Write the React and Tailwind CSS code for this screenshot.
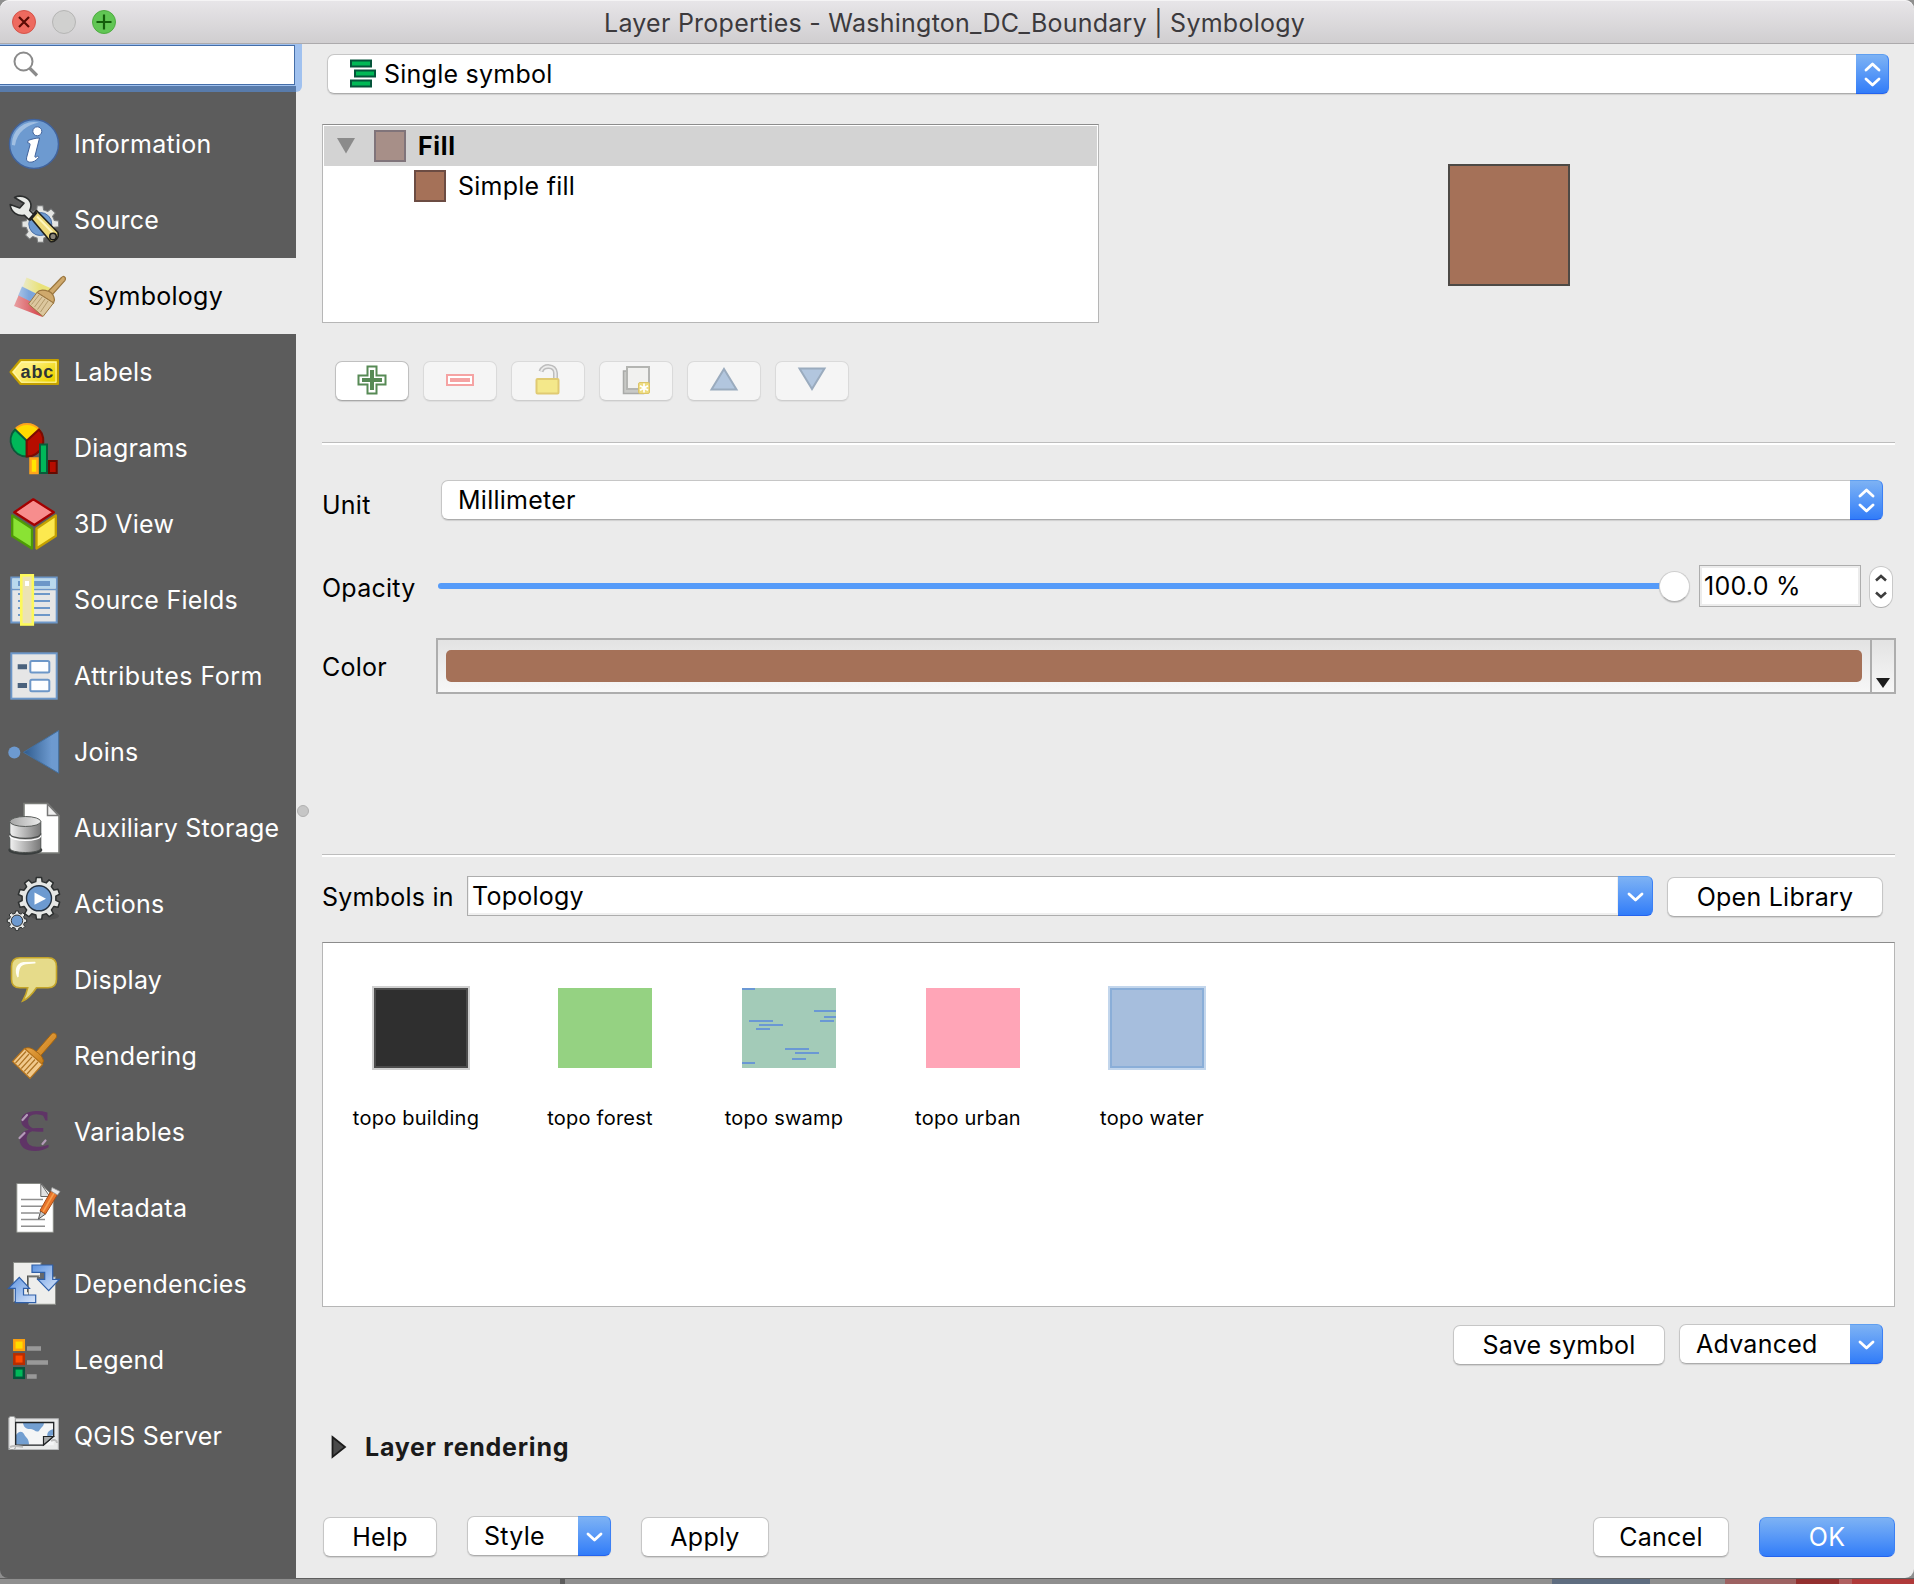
import React from "react";

function gearPath(cx, cy, ro, ri, n, phase = 0) {
  const pts = [];
  const step = (Math.PI * 2) / n;
  for (let i = 0; i < n; i++) {
    const a = phase + i * step;
    [[-0.3, ri], [-0.2, ro], [0.2, ro], [0.3, ri]].forEach(([f, r]) => {
      pts.push(`${(cx + Math.cos(a + f * step) * r).toFixed(2)},${(cy + Math.sin(a + f * step) * r).toFixed(2)}`);
    });
  }
  return `M${pts.join("L")}Z`;
}

const icons = {
  Information: (
    <>
      <defs>
        <clipPath id="infoClip"><circle cx="34" cy="38" r="23.5" /></clipPath>
      </defs>
      <circle cx="34" cy="38" r="24.5" fill="#6d9ad0" stroke="#41639c" strokeWidth="1.5" />
      <path d="M12 39a22 22 0 0 1 27-22.500c-11 2-22 9-24 23z" fill="#c5d8ee" opacity=".6" clipPath="url(#infoClip)" />
      <circle cx="37.300" cy="25.300" r="4.500" fill="#fff" stroke="#41639c" strokeWidth="1" />
      <path d="M28 34.500c4-1.500 8-2.500 11.500-2.500l-4.500 18c-.4 1.600.8 1.800 2.500 0l1.200 1.400c-2.500 3.500-6 5.100-9 4.800-2.800-.3-3.700-2.200-3-5l3.300-12.200c.3-1.200-.3-2-2.300-2.100z" fill="#fff" stroke="#41639c" strokeWidth="1" />
    </>
  ),
  Source: (
    <>
      <path d={gearPath(40.3, 42, 18.5, 14.5, 8, 0.39)} transform="rotate(22 40.300 42)" fill="#e4e5e3" stroke="#77797a" strokeWidth="1" />
      <circle cx="40.300" cy="42" r="11.500" fill="#6d9ad0" stroke="#4b6fa5" strokeWidth="1" />
      <path d="M30 35l6.500-6.500L58 50.500c1.500 5-3 10-7.500 9z" fill="#edd97a" stroke="#20201c" strokeWidth="1.600" strokeLinejoin="round" />
      <path d="M37 34.500l15.500 16" stroke="#fff6bd" strokeWidth="2" />
      <path d="M14.500 15.500c5-2.500 12.500-1.500 15.500 4 1.500 3 1.200 6-.3 9l4.500 4.500-5 5-5-4.800c-6 1.300-13.500-2.700-14-10.700l9.500 3.500 4.300-4.800z" fill="#e9ebe8" stroke="#2c2e2e" strokeWidth="1.600" strokeLinejoin="round" />
      <path d="M29.500 38l7-8" stroke="#222" strokeWidth="3" />
      <circle cx="53" cy="54.500" r="3.300" fill="#8a857a" stroke="#161616" strokeWidth="1.500" />
    </>
  ),
  Symbology: (
    <>
      <defs>
        <linearGradient id="symA" x1="0" x2="1"><stop offset="0" stopColor="#ece77a" stopOpacity=".3" /><stop offset=".6" stopColor="#e9e27a" /></linearGradient>
        <linearGradient id="symB" x1="0" x2="1"><stop offset="0" stopColor="#e8a0a2" /><stop offset=".8" stopColor="#d85258" /></linearGradient>
        <linearGradient id="symC" x1="0" x2="1"><stop offset="0" stopColor="#a9c4e6" /><stop offset=".5" stopColor="#7ba5dc" /></linearGradient>
      </defs>
      <path d="M26.500 19.500l25 11-5 10-24-11z" fill="url(#symA)" />
      <path d="M22 28.500l18 9-3 10-19-9.500z" fill="url(#symC)" />
      <path d="M18.500 37.500l22 11 2 10.500-28.500-11z" fill="url(#symB)" />
      <path d="M61.500 19.500c2-2.500 5 0 3.500 2.800L52.500 36.500l-4-3.500z" fill="#cfa96c" stroke="#9b7740" strokeWidth="1.200" />
      <path d="M37 34.500c3-4 9-2 12-1 2.500 1 5 4 5.500 8.500l-1 3z" fill="#cfa96c" stroke="#9b7740" strokeWidth="1.200" />
      <path d="M37 34.500L53.500 45 43 58.500 28.500 46z" fill="#dcc79e" stroke="#9b7740" strokeWidth="1" />
      <path d="M39 37L31.500 46.500M42 39L34.500 49M45 41L37.500 51.500M48 43L40.500 54" stroke="#b39a6c" strokeWidth="1" />
    </>
  ),
  Labels: (
    <>
      <defs><linearGradient id="lab" x1="0" y1="0" x2="1" y2=".6"><stop offset=".4" stopColor="#fff07e" /><stop offset="1" stopColor="#edd400" /></linearGradient></defs>
      <path d="M10.500 38L20.500 26H58v24H20.500z" fill="url(#lab)" stroke="#c4a000" strokeWidth="2" strokeLinejoin="round" />
      <path d="M13.500 38L21.500 28.200H56v20H21.500z" fill="none" stroke="#fff7b0" strokeWidth="1" />
      <text x="20.500" y="43.700" fontSize="18" fontWeight="700" fontFamily="Liberation Sans, sans-serif" textLength="33" fill="#2e3436">abc</text>
    </>
  ),
  Diagrams: (
    <>
      <path d="M26.700 30.700L15 19.500a16 16 0 0 1 24 0z" fill="#ffda00" stroke="#ffa41c" strokeWidth="2" />
      <path d="M26.700 30.700L15 19.500a16 16 0 0 0 11.700 27z" fill="#00b859" stroke="#0a5a3a" strokeWidth="2" />
      <path d="M26.700 30.700L39 19.500a16 16 0 0 1-12.300 27z" fill="#b60d00" stroke="#7a0c02" strokeWidth="2" />
      <rect x="30.500" y="48.500" width="7" height="14.500" fill="#ffe600" stroke="#ffa41c" strokeWidth="2.500" />
      <rect x="40" y="34.500" width="7" height="28.500" fill="#00b859" stroke="#0a5a3a" strokeWidth="2" />
      <rect x="49" y="51" width="7.700" height="12" fill="#b60d00" stroke="#640a02" strokeWidth="2" />
    </>
  ),
  "3D View": (
    <g strokeWidth="2.300" strokeLinejoin="round">
      <path d="M12.200 29.500l19.800 13v20l-19.800-12.500z" fill="#8ae234" stroke="#4e9a06" />
      <path d="M55.800 29.500L36.500 42.500v20l19.300-12.500z" fill="#fce94f" stroke="#c4a000" />
      <path d="M33.300 13.300l20.500 13-19.500 12.700-20-12.700z" fill="#f78d8d" stroke="#a40000" />
    </g>
  ),
  "Source Fields": (
    <>
      <rect x="11.300" y="15.500" width="45.400" height="45" fill="#e6e6e6" stroke="#6d97c8" strokeWidth="2" />
      <rect x="12.300" y="16.500" width="43.400" height="10" fill="#b9d9ee" />
      <path d="M12 27.500h45" stroke="#6d97c8" strokeWidth="1.600" />
      <rect x="18" y="19" width="32" height="5" fill="#6d97c8" />
      <path d="M18 32h32M18 39h32M18 46h32M18 53h32" stroke="#6d97c8" strokeWidth="2" />
      <rect x="21.300" y="13.300" width="11.500" height="49.200" fill="#ece3b4" stroke="#fdf95a" strokeWidth="2.600" />
      <rect x="25" y="19" width="4" height="5" fill="#fff" />
    </>
  ),
  "Attributes Form": (
    <>
      <rect x="11.300" y="15.300" width="45.400" height="45.400" fill="#e6e6e6" stroke="#6d97c8" strokeWidth="2" />
      <path d="M17.700 28.800H27M17.700 47.500H27" stroke="#4a617c" strokeWidth="5" />
      <rect x="30.300" y="23" width="19" height="11.500" rx="1.500" fill="#fdfeff" stroke="#6d97c8" strokeWidth="2" />
      <rect x="30.300" y="41.700" width="19" height="11.500" rx="1.500" fill="#fdfeff" stroke="#6d97c8" strokeWidth="2" />
    </>
  ),
  Joins: (
    <>
      <defs><linearGradient id="join"><stop offset="0" stopColor="#2f5b8d" /><stop offset=".8" stopColor="#6d9ad0" /></linearGradient></defs>
      <circle cx="14.300" cy="38.500" r="6" fill="#6d9ad0" />
      <path d="M23.500 38.300L58.700 16.500v42.700z" fill="url(#join)" stroke="#44709f" strokeWidth="1" />
    </>
  ),
  "Auxiliary Storage": (
    <>
      <defs>
        <linearGradient id="cyl"><stop offset="0" stopColor="#f2f2f2" /><stop offset=".5" stopColor="#b4b4b4" /><stop offset="1" stopColor="#777" /></linearGradient>
        <linearGradient id="cylTop" x1="0" x2="1"><stop offset="0" stopColor="#a5a5a5" /><stop offset="1" stopColor="#ececec" /></linearGradient>
      </defs>
      <path d="M24 13.500h23.500L59 25.500V63H24z" fill="#fff" stroke="#7b7d79" strokeWidth="1.600" />
      <path d="M47.500 14v11.500H58.500z" fill="#eee" stroke="#777" strokeWidth="1.500" />
      <ellipse cx="25.300" cy="60" rx="17" ry="5" fill="#3a3e3e" />
      <path d="M9.800 31.500v26.500c0 6 31 6 31 0V31.500z" fill="url(#cyl)" stroke="#4e5250" strokeWidth="1" />
      <ellipse cx="25.300" cy="31.500" rx="15.500" ry="5" fill="url(#cylTop)" stroke="#5a5d5b" strokeWidth="1" />
      <path d="M9.800 43.500c0 6.500 31 6.500 31 0" fill="none" stroke="#4a4c4b" strokeWidth="1.300" />
      <path d="M9.800 45.500c0 6.500 31 6.500 31 0" fill="none" stroke="#fff" strokeWidth="1.200" />
    </>
  ),
  Actions: (
    <>
      <ellipse cx="45" cy="50" rx="14" ry="4" fill="#444" opacity=".5" />
      <path d={gearPath(39, 32.3, 21, 17, 10, 0.31)} fill="#e6e7e5" stroke="#2d3030" strokeWidth="1.500" strokeLinejoin="round" />
      <circle cx="39" cy="32.300" r="12.500" fill="#6d9ad0" stroke="#23303f" strokeWidth="1.400" />
      <path d="M34.500 26.500L46 32.700 34.500 38.700z" fill="#fff" />
      <path d={gearPath(17, 54.7, 9.8, 7.7, 8)} fill="#e6e7e5" stroke="#2d3030" strokeWidth="1" strokeLinejoin="round" />
      <circle cx="17" cy="54.700" r="5.700" fill="#6d9ad0" stroke="#333" strokeWidth="1" />
    </>
  ),
  Display: (
    <>
      <path d="M20 15.800h28q8.500 0 8.500 8.500v13q0 8.500-8.500 8.500H36.500C33 51 29 56.500 22.700 59c2.500-4.500 4-8.500 5-13.200H20q-8.500 0-8.500-8.500v-13q0-8.500 8.500-8.500z" fill="#e6db8a" stroke="#c4a52a" strokeWidth="1.600" />
      <path d="M17.500 35.500c-3-6-2.500-14 6-15.500l11.500-.3c1 .8.500 1.800-.3 1.900L26 22.300c-6 .7-7 5-7.300 12.500z" fill="#fffef4" />
    </>
  ),
  Rendering: (
    <>
      <defs><linearGradient id="brush" x1="0" y1="0" x2="1" y2="1"><stop offset="0" stopColor="#e9a64b" /><stop offset="1" stopColor="#c77c14" /></linearGradient></defs>
      <path d="M51.500 16c2.500-2.500 6.500.5 4.500 4L39.500 39l-4.500-4z" fill="url(#brush)" stroke="#a6650e" strokeWidth="1" />
      <path d="M24.500 30.500c4.500-2 8.500.5 11 2.500s6.500 4 8 10l-1.500 3.500z" fill="url(#brush)" stroke="#a6650e" strokeWidth="1" />
      <path d="M24.500 30.500L42.500 46.500 30 60.500 12.500 43.500z" fill="#f1c98c" stroke="#b5731b" strokeWidth="1.200" />
      <path d="M26 33.500L15.500 45M29 36L18.500 47.800M32 38.800L21.300 50.500M35 41.500L24.200 53.300M38 44L27 56" stroke="#ad7324" strokeWidth="1.200" />
    </>
  ),
  Variables: (
    <>
      <text x="16.500" y="56" fontSize="82" fontFamily="Liberation Serif, serif" fill="#5f3466">ε</text>
      <path d="M22.500 26l4.500-5M19.500 44l5-5M42.500 50l3-3.500" stroke="#b39bb8" strokeWidth="2.200" strokeLinecap="round" />
    </>
  ),
  Metadata: (
    <>
      <path d="M16.800 13.500h24L53.300 26.500V62.300H16.800z" fill="#fff" stroke="#888a85" strokeWidth="1" />
      <path d="M40.800 13.500V26.500h9z" fill="#e2e2e2" stroke="#666" strokeWidth="1" />
      <path d="M21 29.500h22M21 36.300h22M21 43h18M21 49.500h24M21 56.300h24" stroke="#8f8f8f" strokeWidth="1.500" />
      <path d="M38.500 49l2-8 5 3z" fill="#c9c9c9" stroke="#555" strokeWidth="1" />
      <path d="M40 40.500L51 21l6.500 3.500L45.500 44z" fill="#e8732a" stroke="#a84e14" strokeWidth="1" />
      <path d="M43 42L54 23" stroke="#f7a04c" strokeWidth="1.500" />
      <path d="M51 21l1-3.500 8 4-2.500 3.500z" fill="#e8e8e8" stroke="#999" strokeWidth=".8" />
    </>
  ),
  Dependencies: (
    <>
      <defs><linearGradient id="dep" x1="0" y1="0" x2="1" y2="1"><stop offset="0" stopColor="#5c93e0" /><stop offset="1" stopColor="#dbe7fb" /></linearGradient></defs>
      <rect x="13.500" y="16.500" width="27.500" height="39" fill="#eeeeec" stroke="#8a8c88" strokeWidth="1" />
      <path d="M27 29.500h13l-3 3v9l-10 5z" fill="#555753" />
      <rect x="28.500" y="31" width="27" height="27.300" fill="#eeeeec" stroke="#8a8c88" strokeWidth="1" />
      <path d="M40 26h6v8h-9v-3h3z" fill="#66686a" />
      <path d="M32 19H52.700V33.300H59.300L48.700 44.700L37.700 33.300H44.700V26.300H32z" fill="url(#dep)" stroke="#2f5fa8" strokeWidth="1.200" />
      <path d="M19.300 31.300L29.500 42.300H23.500V49H35.700V56.700H15.300V42.300H8.500z" fill="url(#dep)" stroke="#2f5fa8" strokeWidth="1.200" />
    </>
  ),
  Legend: (
    <g strokeWidth="2.500">
      <rect x="14.300" y="18.300" width="9.500" height="9.500" fill="#ffdc00" stroke="#ffa30e" />
      <rect x="14.300" y="32.300" width="9.500" height="9.500" fill="#ff4a00" stroke="#b92d00" />
      <rect x="14.300" y="46.300" width="9.500" height="9.500" fill="#00b859" stroke="#05533a" />
      <path d="M27 26.500h14M27 40.500h21M27 54.500h9.700" stroke="#999" strokeWidth="4.700" />
    </g>
  ),
  "QGIS Server": (
    <>
      <rect x="9" y="20.800" width="49.300" height="30.700" fill="#e9eaea" stroke="#b8babb" strokeWidth="1" />
      <rect x="8.800" y="18.500" width="6.500" height="33" rx="2" fill="#f1f1f1" stroke="#9a9c9c" strokeWidth="1" />
      <rect x="15.700" y="24.500" width="38" height="22.700" fill="#f4f5f6" />
      <path d="M23 25h21c-.5 4-3 4-5 8-3 2-5-2-8-2s-7 0-8-6zM16 37c3-4 6-4 8-1 1 3 5 4 5 10.500H16zM53.500 31c-4 1-7 3-6 8l6-2z" fill="#739fd1" />
      <path d="M15.700 24.500h38V38L43.500 47.200H15.700z" fill="none" stroke="#1f2224" strokeWidth="1.300" />
      <path d="M43.500 47V38.500H53.500z" fill="#a9abac" stroke="#1f2224" strokeWidth="1.200" />
      <path d="M10 49c4-2 8-1 13 0M51 43c3-2 6-1 6 2" stroke="#bbb" strokeWidth="2" fill="none" />
    </>
  ),
};

const navItems = Object.keys(icons);

function NavItem({ name }) {
  const active = name === "Symbology";
  return (
    <div className={active ? "flex h-[76px] items-center bg-[#ebebeb] text-black" : "flex h-[76px] items-center text-white"}>
      <svg width="72" height="76" viewBox="0 0 72 76" className="shrink-0 overflow-visible">{icons[name]}</svg>
      <span className={active ? "ml-4 whitespace-nowrap" : name === "Attributes Form" ? "ml-0.5 tracking-[0.48px] whitespace-nowrap" : "ml-0.5 whitespace-nowrap"}>{name}</span>
    </div>
  );
}

function Chevrons({ double, className = "w-[33px]" }) {
  return (
    <div className={`flex shrink-0 items-center justify-center self-stretch rounded-r-[6px] border border-l-0 border-t-[#5f9ff0] border-r-[#3c80f4] border-b-[#2463ee] bg-linear-to-b from-[#7db2f4] to-[#317cf8] ${className}`}>
      <svg width="18" height="28" viewBox="0 0 18 28" fill="none" stroke="#fff" strokeWidth="2.800" strokeLinecap="round" strokeLinejoin="round">
        {double ? <path d="M3 10L9.500 4L16 10M3 19L9.500 25L16 19" /> : <path d="M3 12L9.500 18L16 12" />}
      </svg>
    </div>
  );
}

function Button({ className, children }) {
  return (
    <div className={`flex h-10 items-center justify-center rounded-[7px] border border-[#c6c6c6] border-b-[#acacac] bg-white shadow-[0_1px_1px_rgba(0,0,0,0.12)] ${className}`}>
      {children}
    </div>
  );
}

function Combo({ className, double, children }) {
  return (
    <div className={`flex h-10 items-center rounded-[7px] shadow-[0_1px_1px_rgba(0,0,0,0.12)] ${className}`}>
      <div className="flex min-w-0 flex-1 items-center self-stretch rounded-l-[7px] border border-r-0 border-[#c6c6c6] border-b-[#acacac] bg-white">{children}</div>
      <Chevrons double={double} />
    </div>
  );
}

function ToolButton({ enabled, children }) {
  return (
    <div className={enabled
      ? "flex h-10 w-[74px] items-center justify-center rounded-[7px] border border-[#c0c0c0] border-b-[#a8a8a8] bg-white pb-0.5 shadow-[0_1px_1px_rgba(0,0,0,0.12)]"
      : "flex h-10 w-[74px] items-center justify-center rounded-[7px] border border-[#dadada] border-b-[#cdcdcd] bg-[#f5f5f5] pb-0.5 shadow-[0_1px_1px_rgba(0,0,0,0.06)]"}>
      <svg width="36" height="36" viewBox="0 0 36 36">{children}</svg>
    </div>
  );
}

function Divider({ className }) {
  return <div className={`h-[3px] shrink-0 border-t border-[#bdbdbd] bg-white ${className}`} />;
}

const symbols = [
  { name: "topo building", fill: "bg-[#2f2f2f] outline-2 outline-[#d0d0d0] border-2 border-[#4c4c4c]" },
  { name: "topo forest", fill: "bg-[#95d282]" },
  { name: "topo swamp", fill: "bg-[#a3cbb8]" },
  { name: "topo urban", fill: "bg-[#ffa5b7]" },
  { name: "topo water", fill: "bg-[#a6bedd] outline-2 outline-[#c3d6ec] border-2 border-[#8aaed8]" },
];

export default function App() {
  return (
    <div className="flex h-[1584px] w-[1914px] flex-col overflow-hidden bg-[#8f8f8f] font-['Inter',sans-serif] text-[25px] leading-[30px] tracking-[0.25px] text-black">
      <header className="flex h-11 shrink-0 items-center rounded-t-[9px] border-b border-[#acaaac] bg-linear-to-b from-[#e8e6e9] to-[#d0ced0] shadow-[inset_0_1px_0_#f5f4f5]">
        <div className="flex w-[604px] gap-4 pl-3">
          <svg width="24" height="24" viewBox="0 0 24 24"><circle cx="12" cy="12" r="11.500" fill="#ee6a5f" stroke="#d5544a" /><path d="M7 7l10 10M17 7L7 17" stroke="#5b0c05" strokeWidth="2.200" /></svg>
          <svg width="24" height="24" viewBox="0 0 24 24"><circle cx="12" cy="12" r="11.500" fill="#d0d0cf" stroke="#b5b5b4" /></svg>
          <svg width="24" height="24" viewBox="0 0 24 24"><circle cx="12" cy="12" r="11.500" fill="#61c654" stroke="#4fab42" /><path d="M12 4.500v15M4.500 12h15" stroke="#135e0b" strokeWidth="2.200" /></svg>
        </div>
        <span className="pt-0.5 whitespace-nowrap text-[#3c3a3d]">Layer Properties - Washington_DC_Boundary | Symbology</span>
      </header>

      <div className="flex h-[1534px] shrink-0">
        <aside className="relative flex w-[296px] shrink-0 flex-col rounded-bl-[8px] bg-[#5c5c5c]">
          <div className="flex h-12 shrink-0 items-start border-b-[6px] border-[#587bab] bg-[#a0c1ef]">
            <div className="mt-px flex h-10 w-[295px] items-center border border-l-0 border-[#456ea8] bg-white pl-3">
              <svg width="28" height="28" viewBox="0 0 28 28" fill="none" stroke="#8b8b8b"><circle cx="11.500" cy="10.500" r="9" strokeWidth="2" /><path d="M17.500 17L25 24.500" strokeWidth="3.200" /></svg>
            </div>
          </div>
          <div className="absolute top-0 left-[296px] h-12 w-1.5 rounded-br-[6px] bg-[#a0c1ef]" />
          <nav className="mt-[14px] flex flex-col">
            {navItems.map((n) => <NavItem key={n} name={n} />)}
          </nav>
          <div className="absolute top-[761px] left-[297px] size-3 rounded-full border border-[#b0b0b0] bg-[#c6c6c6]" />
        </aside>

        <main className="flex min-w-0 flex-1 flex-col rounded-br-[9px] bg-[#ebebeb] pr-[19px] pl-[26px]">
          <Combo double className="mt-2.5 mr-1.5 ml-[5px] shrink-0">
            <svg width="28" height="30" viewBox="0 0 28 30" fill="#00b956" stroke="#04553a" strokeWidth="2" className="ml-[22px]">
              <rect x="1" y="1.500" width="20" height="6" /><rect x="5" y="11.500" width="20" height="6" /><rect x="1" y="21.500" width="20" height="6" />
            </svg>
            <span className="ml-1.5 whitespace-nowrap">Single symbol</span>
          </Combo>

          <div className="mt-[30px] flex h-[199px] shrink-0">
            <div className="w-[777px] border border-[#b6b6b6] border-t-[#8c8c8c] bg-white px-px pt-px">
              <div className="flex h-10 items-center bg-[#d3d3d3] pl-[13px]">
                <svg width="18" height="16" viewBox="0 0 18 16"><path d="M0 0h18L9 15.500z" fill="#8b8b8b" /></svg>
                <div className="ml-[19px] size-8 border-2 border-[#80747a] bg-[#a78f88]" />
                <span className="ml-3 font-bold tracking-[0.7px]">Fill</span>
              </div>
              <div className="flex h-10 items-center pl-[90px]">
                <div className="size-8 border-2 border-[#6c4c43] bg-[#a57158]" />
                <span className="ml-3">Simple fill</span>
              </div>
            </div>
            <div className="mt-10 ml-[349px] size-[122px] border-2 border-[#4d4945] bg-[#a57158]" />
          </div>

          <div className="mt-[38px] ml-[13px] flex shrink-0 gap-[14px]">
            <ToolButton enabled>
              <path d="M13.500 4.500h9v9h9v9h-9v9h-9v-9h-9v-9h9z" fill="#fff" stroke="#578a55" strokeWidth="2" />
              <path d="M18 8v20M8 18h20" stroke="#578a55" strokeWidth="4" />
            </ToolButton>
            <ToolButton>
              <rect x="5" y="13" width="26" height="10" fill="#fff" stroke="#f5a3a3" strokeWidth="2" />
              <rect x="8" y="16" width="20" height="4" fill="#f5a3a3" />
            </ToolButton>
            <ToolButton>
              <path d="M11 9.500C13 2.500 25.500 3 25.500 11v6" fill="none" stroke="#bdbdbd" strokeWidth="5" />
              <path d="M11 9.500C13 2.500 25.500 3 25.500 11v6" fill="none" stroke="#ececec" strokeWidth="2" />
              <rect x="6.500" y="17" width="22" height="14.500" rx="1" fill="#f4e88a" stroke="#e0ca72" strokeWidth="2" />
            </ToolButton>
            <ToolButton>
              <rect x="5.500" y="9" width="20" height="22.500" fill="#c8c9c6" stroke="#a9aaa8" strokeWidth="1.500" />
              <rect x="9" y="5" width="22" height="22" fill="#f1f1ef" stroke="#b4b5b2" strokeWidth="2" />
              <rect x="20.500" y="20.500" width="11" height="11" rx="1.500" fill="#eedc80" stroke="#dcc468" />
              <path d="M26 21.500v9M22 23.700l8 4.600M30 23.700l-8 4.600" stroke="#fff" strokeWidth="1.700" />
            </ToolButton>
            <ToolButton>
              <path d="M18 7L30.500 27.500H5.500z" fill="#b2c6de" stroke="#9aabbe" strokeWidth="2" />
            </ToolButton>
            <ToolButton>
              <path d="M18 27L5.500 6.500H30.500z" fill="#b2c6de" stroke="#9aabbe" strokeWidth="2" />
            </ToolButton>
          </div>

          <Divider className="mt-[41px]" />

          <div className="mt-[35px] flex h-10 shrink-0 items-center">
            <span className="mt-[9px]">Unit</span>
            <Combo double className="mr-3 ml-auto w-[1442px]"><span className="ml-4">Millimeter</span></Combo>
          </div>

          <div className="mt-[45px] flex h-[43px] shrink-0 items-center">
            <span className="mt-[3px] w-[116px]">Opacity</span>
            <div className="mb-px h-1.5 flex-1 rounded-l-full bg-[#559bf9]" />
            <div className="mb-px -ml-1 size-[31px] rounded-full border border-[#cfcfcf] border-b-[#b0b0b0] bg-white shadow-[0_1px_1px_rgba(0,0,0,0.15)]" />
            <div className="mb-px ml-[9px] flex h-[42px] w-[162px] items-center border border-[#adadad] bg-white pl-1 shadow-[inset_0_0_0_2px_#ececec]"><span>100.0 %</span></div>
            <div className="mr-0.5 ml-2 flex h-[42px] w-6 items-center justify-center rounded-full border border-[#c8c8c8] border-b-[#adadad] bg-white">
              <svg width="16" height="30" viewBox="0 0 16 30" fill="none" stroke="#3d3d3d" strokeWidth="2.600"><path d="M3 8.500L8 4L13 8.500M3 20.500L8 25L13 20.500" /></svg>
            </div>
          </div>

          <div className="mt-[30px] flex h-14 shrink-0 items-center">
            <span className="mt-0.5">Color</span>
            <div className="-mr-px ml-auto flex h-14 w-[1460px] border-2 border-[#adadad] bg-linear-to-b from-[#e3e3e3] to-[#f7f7f7]">
              <div className="mt-2.5 ml-2 h-8 w-[1416px] rounded-[5px] bg-[#a57158]" />
              <div className="ml-2 flex flex-1 items-end justify-center border-l-2 border-[#adadad] pb-1">
                <svg width="14" height="10" viewBox="0 0 14 10"><path d="M0 0h14L7 10z" fill="#1c1c1c" /></svg>
              </div>
            </div>
          </div>

          <Divider className="mt-40" />

          <div className="mt-[19px] flex h-[41px] shrink-0 items-start">
            <span className="mt-[6px] w-[145px] whitespace-nowrap">Symbols in</span>
            <div className="flex h-10 w-[1186px]">
              <div className="flex flex-1 items-center border border-r-0 border-[#adadad] bg-white pl-1 shadow-[inset_0_-1px_0_1px_#f0f0f0]"><span>Topology</span></div>
              <Chevrons className="w-[35px]" />
            </div>
            <Button className="mt-px ml-[14px] w-[216px]"><span>Open Library</span></Button>
          </div>

          <div className="mt-[25px] flex h-[365px] shrink-0 border border-[#b6b6b6] border-t-[#8c8c8c] bg-white pt-[45px]">
            {symbols.map((s) => (
              <div key={s.name} className="flex h-40 w-[184px] flex-col">
                <div className={`ml-[51px] h-20 w-[94px] shrink-0 ${s.fill}`}>
                  {s.name === "topo swamp" && (
                    <svg width="94" height="80" viewBox="0 0 94 80" stroke="#6a98d4" strokeWidth="2"><path d="M0 1h13M72 23h22M82 29h12M78 33h14M7 33h24M17 37h24M14 41h14M43 61h24M53 65h24M50 71h14M0 75h13" /></svg>
                  )}
                </div>
                <span className="mt-[38px] ml-0.5 self-center text-[20px] leading-6 whitespace-nowrap">{s.name}</span>
              </div>
            ))}
          </div>

          <div className="mt-[17px] flex h-[41px] shrink-0 items-start justify-end gap-[14px] pr-3">
            <Button className="mt-px w-[212px]"><span>Save symbol</span></Button>
            <Combo className="w-[204px]"><span className="ml-4">Advanced</span></Combo>
          </div>

          <div className="mt-[67px] flex h-[30px] shrink-0 items-center text-[#1a1a1a]">
            <svg width="16" height="24" viewBox="0 0 16 24" className="ml-[9px]"><path d="M1.500 2L14 12L1.500 22z" fill="#4a4a4a" stroke="#1c1c1c" strokeWidth="1.800" /></svg>
            <span className="ml-[18px] font-bold tracking-[0.75px]">Layer rendering</span>
          </div>

          <div className="mt-[54px] flex h-[41px] shrink-0 items-start">
            <Button className="mt-px ml-px w-[114px]"><span>Help</span></Button>
            <Combo className="ml-[30px] w-36"><span className="ml-4">Style</span></Combo>
            <Button className="mt-px ml-[30px] w-32"><span>Apply</span></Button>
            <Button className="mt-px mr-[30px] ml-auto w-[136px]"><span>Cancel</span></Button>
            <div className="mt-px flex h-10 w-[136px] items-center justify-center rounded-[7px] border border-t-[#5f9ff0] border-r-[#3c80f4] border-b-[#2463ee] border-l-[#3c80f4] bg-linear-to-b from-[#7db2f4] to-[#317cf8] text-white"><span>OK</span></div>
          </div>
        </main>
      </div>

      <div className="flex h-1.5 shrink-0 border-t border-[#5e5e5e]">
        <div className="w-[560px] bg-[#8f8f8f]" />
        <div className="w-[5px] bg-[#5c5c5c]" />
        <div className="w-[987px] bg-[#8f8f8f]" />
        <div className="w-[98px] bg-[#5f6d80]" />
        <div className="w-[75px] bg-[#8f8f8f]" />
        <div className="w-[71px] bg-[#9d6262]" />
        <div className="w-[43px] bg-[#93302f]" />
        <div className="w-[13px] bg-[#b06060]" />
        <div className="flex-1 bg-[#b03a3a]" />
      </div>
    </div>
  );
}
